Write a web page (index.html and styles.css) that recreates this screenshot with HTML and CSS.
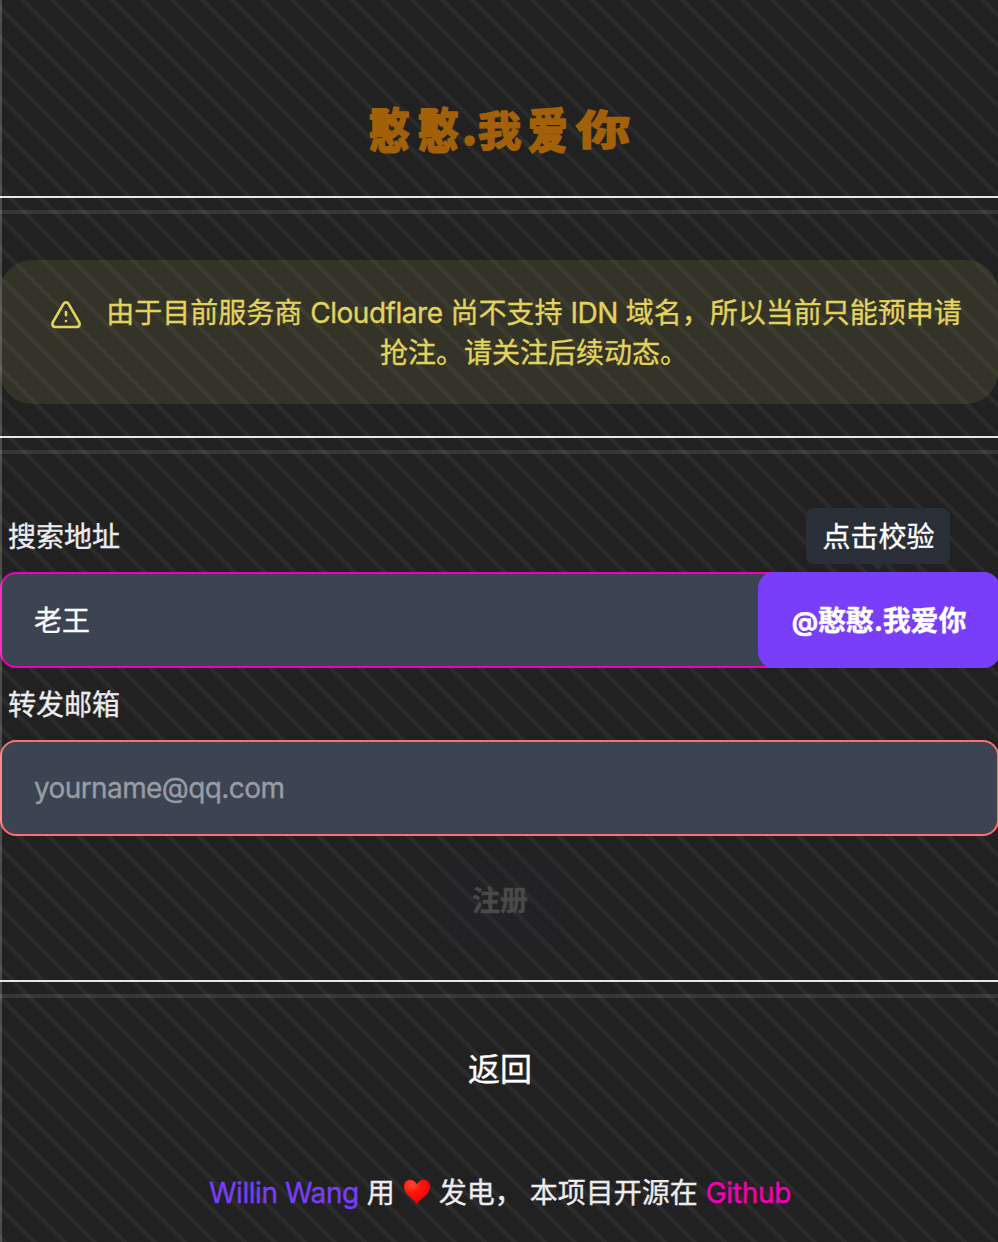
FILE: index.html
```
<!DOCTYPE html>
<html lang="zh-CN"><head><meta charset="utf-8"><title>憨憨.我爱你</title><link rel="stylesheet" href="styles.css"></head>
<body><main class="page">
<header class="header"><svg class="title" viewBox="0 0 264 52" role="heading" aria-label="憨憨.我爱你">
<text transform="translate(1 43) scale(.88 1.03)">憨</text><text transform="translate(50 43) scale(.88 1.03)">憨</text><text x="94" y="39">.</text><text transform="translate(110 41) scale(.94 .9)">我</text><text transform="translate(160 43) scale(.86 1.03)">爱</text><text transform="translate(208 40) scale(1.18 .88)">你</text></svg></header>
<hr class="rule">
<section class="notice"><div class="alert">
<svg class="alert-icon" viewBox="0 0 32 30" fill="none" stroke="currentColor" stroke-width="2.6" stroke-linecap="round" stroke-linejoin="round"><path d="M13.5 3.8 2.7 22.5C1.6 24.5 3 27 5.2 27H26.8C29 27 30.4 24.5 29.3 22.5L18.5 3.8C17.4 1.9 14.6 1.9 13.5 3.8Z"/><path d="M16 12v3.2M16 21v.1"/></svg>
<p class="alert-text">由于目前服务商 <span class="latin">Cloudflare</span> 尚不支持 <span class="latin">IDN</span> 域名，所以当前只能预申请<br>抢注。请关注后续动态。</p></div></section>
<hr class="rule">
<form class="form">
<label class="label" for="name">搜索地址</label>
<div class="search"><input class="input name" id="name" value="老王"><div class="check"><span class="tip">点击校验</span><button class="button" type="button"><span class="at">@</span>憨憨.我爱你</button></div></div>
<label class="label" for="mail">转发邮箱</label>
<input class="input mail" id="mail" placeholder="yourname@qq.com">
<button class="submit" type="button" disabled>注册</button>
</form>
<hr class="rule">
<nav class="back">返回</nav>
<footer class="footer"><span class="author latin">Willin Wang</span><span>用</span><svg class="heart" viewBox="0 0 28 26"><defs><radialGradient id="g" cx=".3" cy=".2" r=".8"><stop offset="0" stop-color="#ff4a38"/><stop offset=".45" stop-color="#ff140c"/><stop offset="1" stop-color="#f00000"/></radialGradient></defs><path fill="url(#g)" d="M14 25C11 20 1 16 1 7.5 1 3 4 .8 7.3.8 10.5.8 13 3 14 5.500 15 3 17.500.8 20.700.8 24 .8 27 3 27 7.500 27 16 17 20 14 25Z"/></svg><span class="power">发电，</span><span class="source">本项目开源在</span><span class="github">Github</span></footer>
</main></body></html>
```
FILE: styles.css
```
* { box-sizing: border-box; }
body {
  margin: 0; background: #212121; color: #ececf0;
  font: 28px/40px Inter, "Noto Sans CJK SC", sans-serif;
  -webkit-text-stroke: .35px currentColor;
}
.page {
  position: relative; height: 1242px; overflow: hidden;
  display: flex; flex-direction: column;
  background: repeating-linear-gradient(45deg, transparent 0 33.3%, rgba(255, 255, 255, .045) 33.3% 43.3%, transparent 43.3% 50%) 0 0 / 30px 30px;
}
.page::after {
  content: ""; position: absolute; left: 0; top: 0; bottom: 0; width: 2px;
  background: rgba(255, 255, 255, .2); pointer-events: none;
}
.header { height: 196px; padding: 105px 0 0 2px; flex: none; text-align: center; line-height: 0; }
.title {
  width: 264px; height: 52px; overflow: visible;
  fill: #a26108; stroke: #a26108; stroke-width: 2px; stroke-linejoin: round;
  font: 700 46px "Noto Sans CJK SC", sans-serif; -webkit-text-stroke: 0;
}
.latin { letter-spacing: -.45px; }
.rule {
  flex: none; width: 100%; height: 18px; margin: 0; border: 0;
  border-top: 2px solid #e5e6eb; border-bottom: 4px solid rgba(255, 255, 255, .1);
}
.notice { height: 222px; padding-top: 46px; flex: none; }
.alert {
  height: 144px; padding: 33px 36px 31px 50px; display: flex; gap: 24px;
  border-radius: 32px; background: rgba(226, 211, 94, .1); color: #e2d35e;
}
.alert-icon { width: 32px; height: 30px; margin-top: 7px; flex: none; }
.alert-text { margin: 0; flex: 1; text-align: center; white-space: nowrap; }
.form { height: 526px; padding-top: 54px; display: flex; flex-direction: column; flex: none; }
.label { height: 64px; padding: 9px 8px 7px; }
.input {
  width: 100%; height: 96px; padding: 0 32px; border-radius: 16px;
  background: #3d4451; color: #f8f8fb; font: inherit; outline: none;
}
.name { border: 2px solid #f000b8; padding-bottom: 2px; }
.mail { width: 999px; border: 2px solid #ff6f6f; letter-spacing: -.6px; }
.input::placeholder { color: #989ca6; opacity: 1; }
.search { position: relative; height: 96px; margin-bottom: 8px; }
.check { position: absolute; right: -2px; top: 0; width: 242px; }
.button {
  width: 100%; height: 96px; border: 0; border-radius: 16px; padding: 2px 0 0;
  background: #793ef9; color: #fff; font: bold 28px/40px Inter, "Noto Sans CJK SC", sans-serif;
  letter-spacing: -.2px;
}
.at { font-size: 26px; }
.tip {
  position: absolute; left: 48px; top: -64px; width: 144px; height: 56px; padding-left: 1px;
  border-radius: 8px; background: #2a2e37; color: #fff; text-align: center; line-height: 58px;
}
.tip::after {
  content: ""; position: absolute; left: 66px; top: 56px;
  border: 6px solid transparent; border-top-color: #2a2e37;
}
.submit {
  align-self: center; width: 124px; height: 96px; margin: 16px 0 0 2px; border: 0; padding: 2px 0 0;
  border-radius: 16px; background: rgba(42, 42, 55, .22); color: #494949;
  font: bold 28px/40px Inter, "Noto Sans CJK SC", sans-serif;
}
.back { height: 144px; padding: 48px 0 0 2px; flex: none; text-align: center; color: #fff; font-size: 32px; line-height: 48px; }
.footer { display: flex; justify-content: center; align-items: center; height: 40px; margin: 31px 0 0 2px; white-space: nowrap; }
.author { color: #793ef9; margin-right: 8px; }
.heart { width: 28px; height: 26px; margin: -3px 8px 0; }
.source { margin-left: 7px; }
.github { color: #f000b8; margin-left: 8px; letter-spacing: -.3px; }
```
